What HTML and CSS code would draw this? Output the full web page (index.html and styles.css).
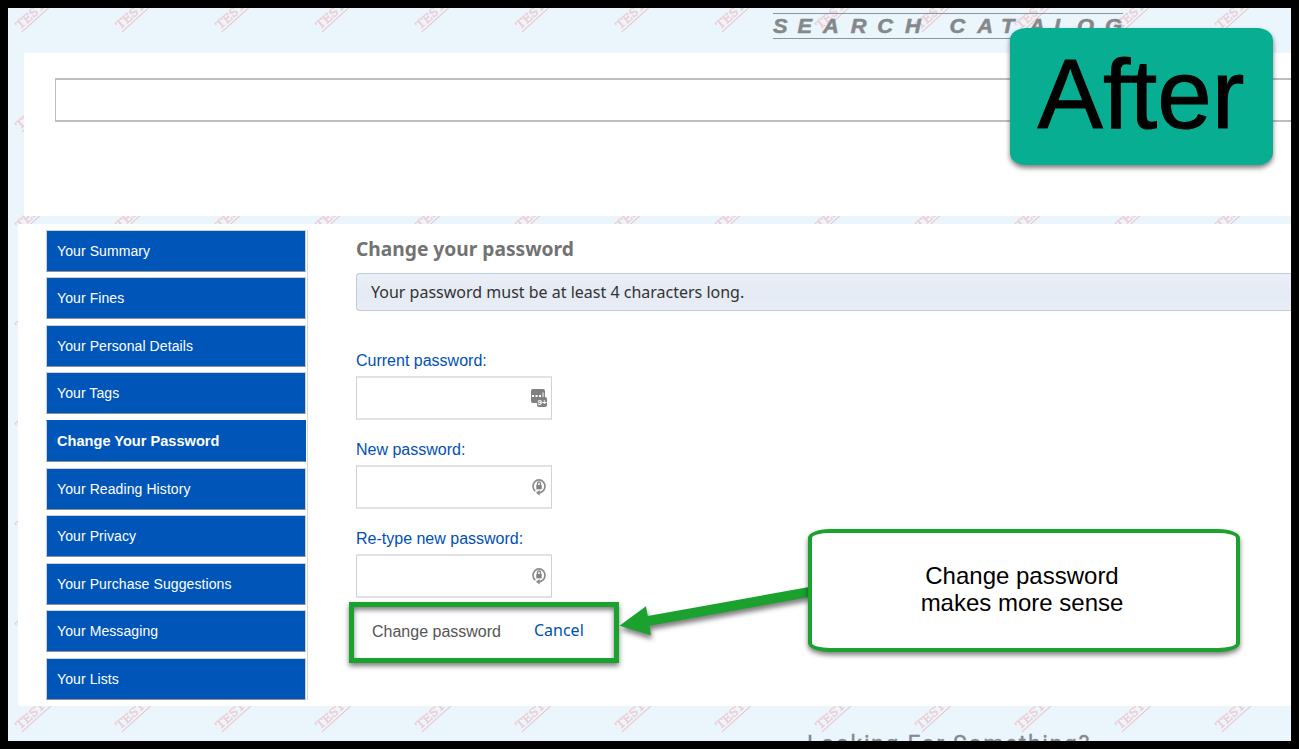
FILE: index.html
```html
<!DOCTYPE html>
<html lang="en">
<head>
<meta charset="utf-8">
<title>Change your password</title>
<link rel="stylesheet" href="styles.css">
</head>
<body>
<div class="frame">
  <svg class="watermark" width="1283" height="733" aria-hidden="true">
    <defs>
      <pattern id="stamp" x="0" y="-60" width="100" height="100" patternUnits="userSpaceOnUse">
        <g transform="translate(14.500,83) rotate(-42)">
          <text class="stamp-text" x="-1" y="-2.500" textLength="46" lengthAdjust="spacingAndGlyphs">TEST S</text>
          <path d="M-1 .3H48" class="stamp-line"/>
        </g>
      </pattern>
    </defs>
    <rect width="1283" height="733" fill="url(#stamp)"/>
  </svg>

  <header class="header">
    <div class="catalog">
      <svg width="353" height="24">
        <text class="catalog-text" transform="scale(1.120 1)" y="19.300" x="0 21.800 44.600 69.500 93.200 117.800 137 157.500 182.300 203.500 228.500 251 271.500 296.500">SEARCH CATALOG</text>
      </svg>
    </div>
  </header>

  <section class="search"><div class="search-box"></div></section>

  <main class="main">
    <nav class="menu">
      <a class="item">Your Summary</a>
      <a class="item">Your Fines</a>
      <a class="item">Your Personal Details</a>
      <a class="item">Your Tags</a>
      <a class="item active">Change Your Password</a>
      <a class="item">Your Reading History</a>
      <a class="item">Your Privacy</a>
      <a class="item">Your Purchase Suggestions</a>
      <a class="item">Your Messaging</a>
      <a class="item">Your Lists</a>
    </nav>
    <div class="content">
      <h1 class="title">Change your password</h1>
      <div class="notice">Your password must be at least 4 characters long.</div>
      <form class="form">
        <div class="field">
          <label class="label">Current password:</label>
          <div class="input">
            <svg class="icon" width="18" height="20" viewBox="0 0 18 20">
              <rect x="1" y="1" width="14" height="14" rx="2" fill="#808080"/>
              <rect x="7" y="9" width="10" height="10" rx="2" fill="#808080"/>
              <path d="M2 7h2v2H2zM5.500 7h2v2h-2zM9 7h2v2H9zM12.500 4.500h1v4.500h-1z" fill="#fff"/>
              <text x="7.600" y="16.600" class="badge">9+</text>
            </svg>
          </div>
        </div>
        <div class="field">
          <label class="label">New password:</label>
          <div class="input">
            <svg class="icon" width="18" height="20" viewBox="0 0 18 20"><use href="#lock"/></svg>
          </div>
        </div>
        <div class="field">
          <label class="label">Re-type new password:</label>
          <div class="input">
            <svg class="icon" width="18" height="20" viewBox="0 0 18 20">
              <g id="lock">
                <path d="M5.300 14.200A6 6.300 0 1 1 12.700 14.200L9.500 16" fill="none" stroke="#8a8a8a" stroke-width="1.700"/>
                <path d="M6 15.800L9.700 13V18.500Z" fill="#858585"/>
                <rect x="6.300" y="8" width="5.400" height="4.300" fill="#808080"/>
                <path d="M7.500 8V6.500a1.500 1.500 0 0 1 3 0V8" fill="none" stroke="#858585" stroke-width="1.400"/>
              </g>
            </svg>
          </div>
        </div>
        <div class="actions">
          <span class="submit">Change password</span>
          <a class="cancel">Cancel</a>
        </div>
      </form>
    </div>
  </main>

  <footer class="footer"><span class="footer-title">Looking For Something?</span></footer>

  <div class="after">After</div>
  <svg class="arrow" width="200" height="70" viewBox="612 580 200 70">
    <path d="M619.500 625.800L646 606.300L647.700 616L809 587V597L649.500 625.700L651 635.300Z" fill="#1ba12d"/>
  </svg>
  <div class="callout">Change password<br>makes more sense</div>
</div>
</body>
</html>
```
FILE: styles.css
```css
* { box-sizing: border-box; }
body { margin: 0; background: #000; padding: 8px; font-family: "Liberation Sans", Arial, sans-serif; }
.frame {
  position: relative; width: 1283px; height: 733px; overflow: hidden;
  background: #eaf5fc; display: flex; flex-direction: column;
}
.watermark { position: absolute; left: 0; top: 0; }
.stamp-text { font: 12.500px "Liberation Serif", serif; fill: #eed3da; stroke: #efc6cc; stroke-width: .4px; }
.stamp-line { stroke: #edc4ca; stroke-width: 1.100px; fill: none; }

.header { position: relative; height: 45px; flex: none; padding: 5px 0 0 765px; }
.catalog { width: 350px; height: 26px; border-top: 1px solid #8e9397; border-bottom: 1px solid #8e9397; }
.catalog svg { display: block; overflow: visible; }
.catalog-text { font: italic 900 19.500px "Liberation Sans", sans-serif; fill: #84888b; stroke: #84888b; stroke-width: .5px; }

.search { position: relative; height: 163px; flex: none; margin: 0 0 8px 16px; padding: 25px 0 0 31px; background: #fff; }
.search-box { height: 44px; border: 2px solid #bdbdbd; border-width: 2px 0 2px 1px; }

.main { position: relative; height: 482px; flex: none; margin-left: 10px; padding-top: 6px; background: #fff; display: flex; }
.menu { width: 262px; height: 470px; margin: -.2px 0 0 28px; padding-right: 1px; border-right: 1px solid #d8d8da; display: flex; flex-direction: column; justify-content: space-between; }
.item {
  height: 42px; flex: none; padding-left: 10px; line-height: 41px; font-size: 14px; letter-spacing: .09px; color: #fff;
  background: #0055b8; border: 1px solid #cfd1d5; border-bottom-color: #8f9196;
}
.active { font-size: 14.600px; letter-spacing: 0; font-weight: 700; border-color: #0055b8 #0055b8 #8f9196 #cfd1d5; }

.content { flex: 1; margin-left: 48px; }
.title { margin: 4px 0 10px; font: 700 19.200px/29px "Noto Sans", sans-serif; color: #727272; }
.notice {
  height: 38px; padding-left: 14px; line-height: 36px; font-family: "Noto Sans", sans-serif; font-size: 16px; color: #333;
  background: linear-gradient(#ebeff7, #e5ebf4 50%, #e8edf6); border: 1px solid #bccbe4; border-right: 0; border-radius: 4px 0 0 4px;
}
.form { padding-top: 38px; }
.field { height: 89px; }
.label { display: block; height: 27px; font-size: 16px; line-height: 23px; color: #0050b4; }
.input { width: 196px; height: 44px; border: 1px solid #d2d2d2; border-top: 2px solid #e2e2e2; border-bottom: 2px solid #e2e2e2; display: flex; justify-content: flex-end; align-items: center; padding-right: 3px; }
.badge { font: 700 8px "Liberation Sans", sans-serif; fill: #fff; }
.actions {
  position: relative; width: 270px; height: 61px; margin: -14px 0 0 -7px; padding: 0 0 4px 18px;
  border: 5px solid #1ba12d; display: flex; align-items: center; gap: 33px;
  box-shadow: 0 3px 5px rgba(0,0,0,.5), inset 0 3px 5px rgba(0,0,0,.5);
}
.submit { padding-top: 2px; font-size: 16px; line-height: 24px; color: #555; }
.cancel { padding-bottom: 2px; font: 16px/24px "Noto Sans", sans-serif; color: #0050b4; }

.footer { position: relative; height: 29px; flex: none; margin-top: 6px; padding: 17px 0 0 799px; overflow: hidden; }
.footer-title { display: block; font: 400 23px/32px Roboto, sans-serif; letter-spacing: 1.650px; color: #84898e; -webkit-text-stroke: .3px #84898e; white-space: nowrap; }

.after {
  position: absolute; left: 1002px; top: 20px; width: 263px; height: 137px; padding-right: 1px;
  border-radius: 16px / 12px; background: #08ae91; box-shadow: 0 3px 5px rgba(0,0,0,.5);
  font-size: 98px; line-height: 133px; text-align: center; color: #000; -webkit-text-stroke: 1px #000;
}
.arrow { position: absolute; left: 604px; top: 572px; filter: drop-shadow(1px 4px 2.500px rgba(0,0,0,.5)); }
.callout {
  position: absolute; left: 800px; top: 521px; width: 432px; height: 123px; padding: 0 4px 3px 0;
  display: flex; align-items: center; justify-content: center; text-align: center;
  background: #fff; border: 4px solid #1ba12d; border-radius: 22px / 9px; box-shadow: 0 3px 5px rgba(0,0,0,.5);
  font-size: 24px; line-height: 27px; color: #000;
}
```
